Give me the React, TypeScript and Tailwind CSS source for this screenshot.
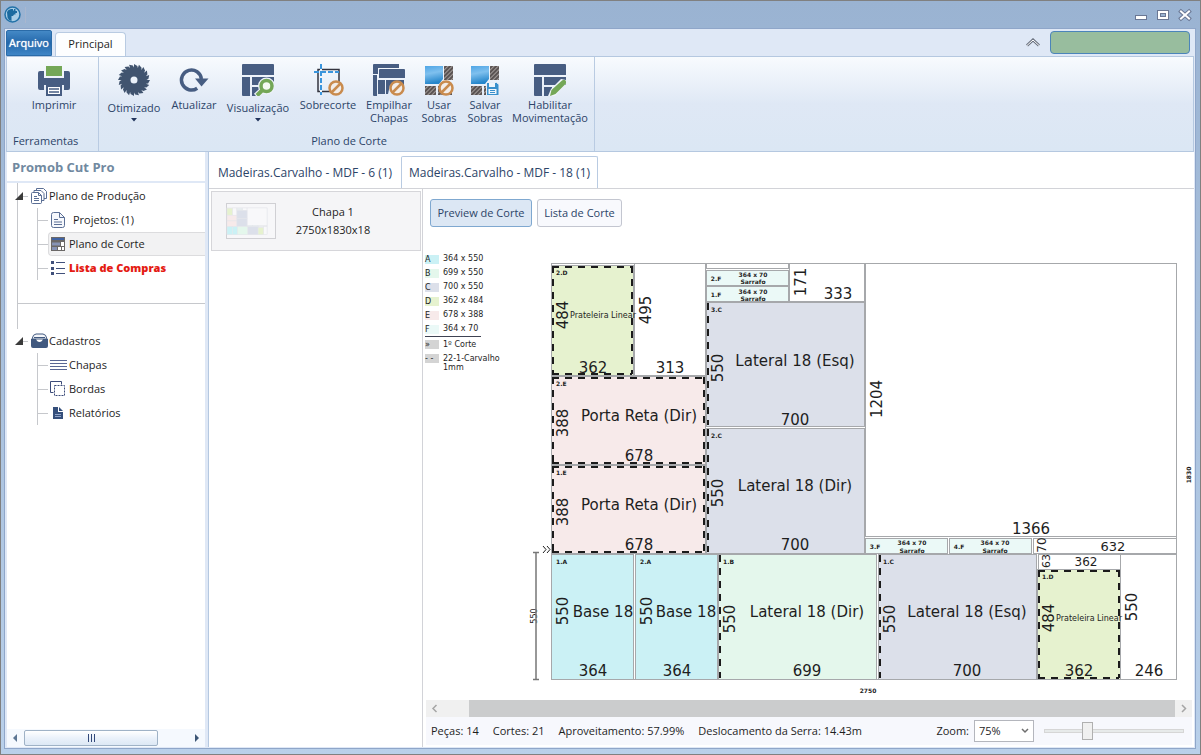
import { useState } from 'react';
import type { ReactNode } from 'react';

type Piece = {
  x: number;
  y: number;
  w: number;
  h: number;
  fill?: string;
  code?: string;
  edges?: string;
};

type Label = {
  x: number;
  y: number;
  text: string;
  size?: number;
  vertical?: boolean;
};

const colors = {
  a: '#cbf1f5',
  b: '#e4f7ec',
  c: '#dce0ea',
  d: '#e6f2cf',
  e: '#f7eaea',
  f: '#ebf9f7',
};

// Positions are relative to the sheet's top left corner
const pieces: Piece[] = [
  { x: 83, y: 0, w: 71, h: 112 },
  { x: 155, y: 0, w: 82, h: 5 },
  { x: 238, y: 0, w: 75, h: 38 },
  { x: 314, y: 0, w: 311, h: 273 },
  { x: 482, y: 275, w: 143, h: 15 },
  { x: 487, y: 291, w: 82, h: 15 },
  { x: 569, y: 291, w: 56, h: 125 },
  { x: 0, y: 2, w: 82, h: 110, fill: colors.d, code: '2.D', edges: 'lrtb' },
  { x: 0, y: 113, w: 154, h: 88, fill: colors.e, code: '2.E', edges: 'lrtb' },
  { x: 0, y: 202, w: 154, h: 88, fill: colors.e, code: '1.E', edges: 'lrtb' },
  { x: 155, y: 7, w: 82, h: 15, fill: colors.f },
  { x: 155, y: 23, w: 82, h: 15, fill: colors.f },
  { x: 155, y: 39, w: 158, h: 124, fill: colors.c, code: '3.C', edges: 'l' },
  { x: 155, y: 165, w: 158, h: 125, fill: colors.c, code: '2.C', edges: 'l' },
  { x: 314, y: 275, w: 82, h: 15, fill: colors.f },
  { x: 398, y: 275, w: 82, h: 15, fill: colors.f },
  { x: 0, y: 291, w: 82, h: 125, fill: colors.a, code: '1.A' },
  { x: 84, y: 291, w: 82, h: 125, fill: colors.a, code: '2.A' },
  { x: 167, y: 291, w: 158, h: 125, fill: colors.b, code: '1.B', edges: 'l' },
  { x: 327, y: 291, w: 158, h: 125, fill: colors.c, code: '1.C', edges: 'l' },
  { x: 486, y: 306, w: 83, h: 110, fill: colors.d, code: '1.D', edges: 'lrtb' },
];

const labels: Label[] = [
  { x: 52, y: 52, text: 'Prateleira Linear', size: 8 },
  { x: 42, y: 105, text: '362' },
  { x: 12, y: 52, text: '484', vertical: true },
  { x: 95, y: 47, text: '495', vertical: true },
  { x: 119, y: 105, text: '313' },
  { x: 88, y: 153, text: 'Porta Reta (Dir)' },
  { x: 88, y: 193, text: '678' },
  { x: 12, y: 160, text: '388', vertical: true },
  { x: 88, y: 242, text: 'Porta Reta (Dir)' },
  { x: 88, y: 282, text: '678' },
  { x: 12, y: 249, text: '388', vertical: true },
  { x: 250, y: 19, text: '171', vertical: true },
  { x: 287, y: 31, text: '333' },
  { x: 244, y: 98, text: 'Lateral 18 (Esq)' },
  { x: 244, y: 157, text: '700' },
  { x: 167, y: 105, text: '550', vertical: true },
  { x: 244, y: 223, text: 'Lateral 18 (Dir)' },
  { x: 244, y: 282, text: '700' },
  { x: 167, y: 230, text: '550', vertical: true },
  { x: 326, y: 136, text: '1204', vertical: true },
  { x: 480, y: 266, text: '1366' },
  { x: 52, y: 349, text: 'Base 18' },
  { x: 42, y: 408, text: '364' },
  { x: 12, y: 348, text: '550', vertical: true },
  { x: 135, y: 349, text: 'Base 18' },
  { x: 126, y: 408, text: '364' },
  { x: 96, y: 348, text: '550', vertical: true },
  { x: 256, y: 349, text: 'Lateral 18 (Dir)' },
  { x: 256, y: 408, text: '699' },
  { x: 179, y: 356, text: '550', vertical: true },
  { x: 416, y: 349, text: 'Lateral 18 (Esq)' },
  { x: 416, y: 408, text: '700' },
  { x: 339, y: 356, text: '550', vertical: true },
  { x: 538, y: 355, text: 'Prateleira Linear', size: 8 },
  { x: 528, y: 408, text: '362' },
  { x: 498, y: 355, text: '484', vertical: true },
  { x: 581, y: 344, text: '550', vertical: true },
  { x: 598, y: 408, text: '246' },
  { x: 562, y: 283, text: '632', size: 13 },
  { x: 535, y: 299, text: '362', size: 12 },
  { x: 491, y: 282, text: '70', size: 12, vertical: true },
  { x: 495, y: 298, text: '63', size: 11, vertical: true },
  { x: 165, y: 15, text: '2.F', size: 6 },
  { x: 165, y: 31, text: '1.F', size: 6 },
  { x: 324, y: 283, text: '3.F', size: 6 },
  { x: 408, y: 283, text: '4.F', size: 6 },
  { x: 202, y: 11, text: '364 x 70', size: 6 },
  { x: 202, y: 18, text: 'Sarrafo', size: 6 },
  { x: 202, y: 28, text: '364 x 70', size: 6 },
  { x: 202, y: 35, text: 'Sarrafo', size: 6 },
  { x: 361, y: 279, text: '364 x 70', size: 6 },
  { x: 361, y: 287, text: 'Sarrafo', size: 6 },
  { x: 444, y: 279, text: '364 x 70', size: 6 },
  { x: 444, y: 287, text: 'Sarrafo', size: 6 },
  { x: 317, y: 427, text: '2750', size: 6 },
  { x: 637, y: 212, text: '1830', size: 6, vertical: true },
  { x: -17, y: 353, text: '550', size: 8, vertical: true },
];

const legend = [
  { code: 'A', size: '364 x 550', tone: 'bg-[#cbf1f5]' },
  { code: 'B', size: '699 x 550', tone: 'bg-[#e4f7ec]' },
  { code: 'C', size: '700 x 550', tone: 'bg-[#dce0ea]' },
  { code: 'D', size: '362 x 484', tone: 'bg-[#e6f2cf]' },
  { code: 'E', size: '678 x 388', tone: 'bg-[#f7eaea]' },
  { code: 'F', size: '364 x 70', tone: 'bg-[#ebf9f7]' },
];

export default function App() {
  return (
    <div className="flex min-h-screen flex-col border border-[#808080] bg-linear-to-b from-[#9ab3d2] to-[#b9d0ea] pr-1 pb-[5px] pl-[3px] font-['Open_Sans',sans-serif] text-[11px] text-[#1e1e1e]">
      <TitleBar />
      <div className="flex flex-1 flex-col border border-[#8fa6c9] bg-[#dfe8f6] px-px pb-px">
        <RibbonTabs />
        <Ribbon />
        <div className="flex flex-1 pl-px">
          <Sidebar />
          <Workspace />
        </div>
      </div>
    </div>
  );
}

function TitleBar() {
  return (
    <header className="flex h-[27px] items-center justify-between pr-1">
      <div className="flex items-center gap-1">
        <IconGlobe />
        <span className="h-4 w-px bg-[#a9b7cf]" />
      </div>
      <div className="flex items-center gap-2">
        <button type="button" aria-label="Minimizar">
          <svg width="14" height="14" viewBox="0 0 14 14">
            <rect x="1.500" y="7.500" width="11" height="4" fill="#fff" stroke="#6a7794" />
          </svg>
        </button>
        <button type="button" aria-label="Maximizar">
          <svg width="14" height="14" viewBox="0 0 14 14">
            <rect x="1.500" y="2.500" width="11" height="9" fill="#fff" stroke="#6a7794" />
            <rect x="4.500" y="5.500" width="5" height="3" fill="#9ab3d2" stroke="#6a7794" />
          </svg>
        </button>
        <button type="button" aria-label="Fechar">
          <svg width="14" height="14" viewBox="0 0 14 14" strokeLinecap="square">
            <path d="M3 3.500 11 10.500M11 3.500 3 10.500" stroke="#6a7794" strokeWidth="4" />
            <path d="M3 3.500 11 10.500M11 3.500 3 10.500" stroke="#fff" strokeWidth="2" />
          </svg>
        </button>
      </div>
    </header>
  );
}

function RibbonTabs() {
  return (
    <nav className="flex h-[27px] items-end justify-between">
      <div className="flex items-end gap-[3px]">
        <button
          type="button"
          className="h-[26px] w-[46px] rounded-t-xs border border-[#2a6ba8] bg-linear-to-b from-[#4489c6] via-[#2368ab] to-[#3f86c6] text-white text-shadow-[0_0_1px_#fff]"
        >
          Arquivo
        </button>
        <button
          type="button"
          className="h-6 w-[71px] rounded-t-sm border border-b-0 border-[#b9cbe2] bg-[#fdfeff]"
        >
          Principal
        </button>
      </div>
      <div className="flex items-center gap-[10px] pr-1 pb-[2px]">
        <button type="button" aria-label="Recolher">
          <svg width="14" height="10" viewBox="0 0 14 10" fill="none">
            <path d="M1 7.500 7 2l6 5.500" stroke="#6b7280" strokeWidth="3" />
            <path d="M1 7.500 7 2l6 5.500" stroke="#fff" strokeWidth="1" />
          </svg>
        </button>
        <button
          type="button"
          aria-label="Conta"
          className="h-[23px] w-[140px] rounded-[4px] border border-[#4b84ba] bg-[#98bd9e]"
        />
      </div>
    </nav>
  );
}

function Ribbon() {
  return (
    <section className="flex h-24 border border-[#b5c8e0] bg-linear-to-b from-[#f8fbfe] via-[#dfe8f5] to-[#dbe7f4] text-[#2c4468]">
      <RibbonGroup title="Ferramentas" className="w-[92px] pl-[6px]" titleClass="text-left">
        <RibbonButton label="Imprimir" width="w-[82px]" icon={<IconPrinter />} />
      </RibbonGroup>
      <RibbonGroup title="Plano de Corte" className="w-[496px] pl-[5px]" titleClass="text-center">
        <RibbonButton label="Otimizado" width="w-[60px]" icon={<IconSaw />} menu />
        <RibbonButton label="Atualizar" width="w-[60px]" icon={<IconRefresh />} />
        <RibbonButton label="Visualização" width="w-[68px]" icon={<IconView />} menu />
        <RibbonButton label="Sobrecorte" width="w-[72px]" icon={<IconOvercut />} />
        <RibbonButton label="Empilhar Chapas" width="w-[50px]" icon={<IconStack />} />
        <RibbonButton label="Usar Sobras" width="w-[50px]" icon={<IconScraps />} />
        <RibbonButton label="Salvar Sobras" width="w-[42px]" icon={<IconScraps save />} />
        <RibbonButton label="Habilitar Movimentação" width="w-[88px]" icon={<IconMove />} />
      </RibbonGroup>
    </section>
  );
}

function RibbonGroup({
  title,
  className,
  titleClass,
  children,
}: {
  title: string;
  className: string;
  titleClass: string;
  children: ReactNode;
}) {
  return (
    <div className={`flex shrink-0 flex-col justify-between border-r border-[#b9cbe2] pt-[7px] pb-[2px] ${className}`}>
      <div className="flex items-start">{children}</div>
      <div className={`leading-4 ${titleClass}`}>{title}</div>
    </div>
  );
}

function RibbonButton({
  label,
  width,
  icon,
  menu = false,
}: {
  label: string;
  width: string;
  icon: ReactNode;
  menu?: boolean;
}) {
  return (
    <button type="button" className={`flex shrink-0 flex-col items-center leading-[13px] ${width}`}>
      {icon}
      <span className={menu ? 'mt-[5px]' : 'mt-[2px]'}>{label}</span>
      {menu && (
        <svg width="6" height="4" viewBox="0 0 6 4" className="mt-1">
          <path d="M0 0h6L3 3.500z" fill="#22345c" />
        </svg>
      )}
    </button>
  );
}

function Sidebar() {
  return (
    <aside className="flex w-[198px] shrink-0 flex-col bg-white">
      <h1 className="h-[31px] border-b-2 border-[#dfe8f6] pl-[5px] text-[13px] leading-[30px] font-bold text-[#7189a0]">
        Promob Cut Pro
      </h1>
      <div className="ml-[10px] h-[121px] border-b border-l border-[#c6c8cc] pt-px">
        <TreeRoot icon={<IconDocs />} label="Plano de Produção" />
        <ul className="ml-[19px] border-l border-[#c6c8cc]">
          <TreeItem icon={<IconDoc />} label="Projetos: (1)" indent />
          <TreeItem icon={<IconPlan />} label="Plano de Corte" active />
          <TreeItem icon={<IconList />} label="Lista de Compras" alert />
        </ul>
      </div>
      <div className="ml-[10px] h-[25px] border-l border-[#c6c8cc]" />
      <div className="ml-[11px]">
        <TreeRoot icon={<IconInbox />} label="Cadastros" />
        <ul className="ml-[19px] border-l border-[#c6c8cc]">
          <TreeItem icon={<IconSheets />} label="Chapas" />
          <TreeItem icon={<IconEdges />} label="Bordas" />
          <TreeItem icon={<IconReport />} label="Relatórios" />
        </ul>
      </div>
      <div className="mt-auto flex h-[18px] items-center gap-[6px] bg-[#f5f9fe] px-[5px]">
        <svg width="6" height="8" viewBox="0 0 6 8">
          <path d="M5 0v8L1 4z" fill="#5c7693" />
        </svg>
        <div className="flex h-4 w-[134px] items-center justify-center gap-[2px] rounded-xs border border-[#9fb2c6] bg-linear-to-b from-white via-[#eaf1fa] to-[#dde8f5]">
          <span className="h-2 w-px bg-[#33497a]" />
          <span className="h-2 w-px bg-[#33497a]" />
          <span className="h-2 w-px bg-[#33497a]" />
        </div>
        <svg width="6" height="8" viewBox="0 0 6 8" className="ml-auto">
          <path d="M1 0v8l4-4z" fill="#3c5675" />
        </svg>
      </div>
    </aside>
  );
}

function TreeRoot({ icon, label }: { icon: ReactNode; label: string }) {
  return (
    <div className="flex h-6 items-center">
      <svg width="8" height="8" viewBox="0 0 8 8" className="-ml-[3px]">
        <path d="M8 0v8H0z" fill="#3b3b3b" />
      </svg>
      <span className="w-[5px] border-t border-[#c6c8cc]" />
      <span className="ml-[3px] flex w-[18px] shrink-0">{icon}</span>
      <span>{label}</span>
    </div>
  );
}

function TreeItem({
  icon,
  label,
  active = false,
  alert = false,
  indent = false,
}: {
  icon: ReactNode;
  label: string;
  active?: boolean;
  alert?: boolean;
  indent?: boolean;
}) {
  return (
    <li className="flex h-6 items-center">
      <span className="w-[10px] shrink-0 border-t border-[#c6c8cc]" />
      <span
        className={`flex h-6 flex-1 items-center rounded-l-sm border border-r-0 pl-px whitespace-nowrap ${
          active ? 'border-[#dcdcde] bg-[#f2f2f3]' : 'border-transparent'
        } ${alert ? 'font-extrabold text-[#e41b13]' : ''}`}
      >
        <span className="flex w-[19px] shrink-0">{icon}</span>
        <span className={indent ? 'pl-1' : ''}>{label}</span>
      </span>
    </li>
  );
}

function Workspace() {
  return (
    <main className="ml-[3px] flex min-w-0 flex-1 flex-col border-l border-[#b5c8e0] bg-white">
      <div className="flex h-9 items-end text-[12px] text-[#2c4468]">
        <button type="button" className="h-8 w-[192px] pt-px">
          Madeiras.Carvalho - MDF - 6 (1)
        </button>
        <button
          type="button"
          className="h-8 w-[197px] rounded-t-xs border border-b-0 border-[#b9cbe2]"
        >
          Madeiras.Carvalho - MDF - 18 (1)
        </button>
      </div>
      <div className="flex flex-1 border-t border-[#d2d3d8]">
        <div className="w-[214px] shrink-0 border-r border-[#d2d3d8] py-[2px] pr-px pl-[2px]">
          <SheetCard />
        </div>
        <div className="flex min-w-0 flex-1 flex-col">
          <div className="flex gap-[5px] px-[7px] pt-[10px] text-[#2c4468]">
            <button
              type="button"
              className="h-7 w-[102px] rounded-[3px] border border-[#7fa8d0] bg-[#dce7f4]"
            >
              Preview de Corte
            </button>
            <button
              type="button"
              className="h-7 w-[85px] rounded-[3px] border border-[#c3c6d0] bg-[#f8f9fd]"
            >
              Lista de Corte
            </button>
          </div>
          <div className="flex flex-1 items-start overflow-hidden pt-[25px]">
            <Legend />
            <CutPlan />
          </div>
          <HorizontalScroll />
          <StatusBar />
        </div>
      </div>
    </main>
  );
}

function SheetCard() {
  return (
    <button
      type="button"
      className="flex h-[60px] w-full items-center border border-[#d6d6da] bg-[#f5f5f7] pl-[14px]"
    >
      <svg width="50" height="36" viewBox="0 0 50 36" className="shrink-0">
        <rect x="0.500" y="0.500" width="49" height="35" fill="#f7f7f9" stroke="#d0d0d4" />
        <g transform="translate(1 5) scale(0.064)">
          <rect width="626" height="416" fill="none" stroke="#e4e5ea" strokeWidth="8" />
          {pieces.map((p, i) => (
            <rect
              key={i}
              x={p.x}
              y={p.y}
              width={p.w}
              height={p.h}
              fill={p.fill ?? '#f8f8fa'}
              stroke="#e4e5ea"
              strokeWidth="8"
            />
          ))}
        </g>
      </svg>
      <span className="ml-[19px] w-[76px] leading-[18px]">
        <span className="block">Chapa 1</span>
        <span className="block">2750x1830x18</span>
      </span>
    </button>
  );
}

function Legend() {
  return (
    <div className="w-[100px] shrink-0 pl-[2px] font-['DejaVu_Sans',sans-serif] text-[8px]">
      <ul className="w-[56px] border-b border-[#3f4353]">
        {legend.map((item) => (
          <li key={item.code} className="flex h-[14px] items-center gap-1 whitespace-nowrap">
            <span className={`h-[9px] w-[14px] shrink-0 leading-[9px] ${item.tone}`}>{item.code}</span>
            <span>{item.size}</span>
          </li>
        ))}
      </ul>
      <div className="mt-[3px] flex items-center gap-1 leading-[9px]">
        <span className="h-[9px] w-[14px] bg-[#d4d4d4]">»</span>
        <span>1º Corte</span>
      </div>
      <div className="mt-[5px] flex items-start gap-1 leading-[9px]">
        <span className="h-[9px] w-[14px] shrink-0 bg-[#d4d4d4]">- -</span>
        <span className="w-[60px]">22-1-Carvalho 1mm</span>
      </div>
    </div>
  );
}

function edgePath(p: Piece) {
  const left = p.x + 2;
  const right = p.x + p.w - 1;
  const top = p.y + 2;
  const bottom = p.y + p.h - 1;
  const lines: Record<string, string> = {
    l: `M${left} ${top - 1}V${bottom}`,
    r: `M${right} ${top - 1}V${bottom}`,
    t: `M${left - 1} ${top}H${right}`,
    b: `M${left - 1} ${bottom}H${right}`,
  };
  return (p.edges ?? '').split('').map((e) => lines[e]).join('');
}

function CutPlan() {
  return (
    <svg
      width="670"
      height="440"
      viewBox="-28 -11 670 440"
      className="shrink-0 overflow-visible font-['DejaVu_Sans',sans-serif]"
      fill="#1e1e1e"
    >
      <rect x="0.500" y="0.500" width="625" height="416" fill="#fff" stroke="#a6a8ab" />
      {pieces.map((p, i) => (
        <g key={i}>
          <rect
            x={p.x + 0.5}
            y={p.y + 0.5}
            width={p.w}
            height={p.h}
            fill={p.fill ?? '#fff'}
            stroke="#a6a8ab"
          />
          {p.edges && (
            <path
              d={edgePath(p)}
              stroke="#1b1b1b"
              strokeWidth="2"
              strokeDasharray="7 6"
              fill="none"
            />
          )}
          {p.code && (
            <text x={p.x + 5} y={p.y + 10} fontSize="6" fontWeight="bold">
              {p.code}
            </text>
          )}
        </g>
      ))}
      {labels.map((l, i) => (
        <text
          key={i}
          x={l.x}
          y={l.y}
          fontSize={l.size ?? 15}
          fontWeight={l.size === 6 ? 'bold' : 'normal'}
          textAnchor="middle"
          dominantBaseline="central"
          transform={l.vertical ? `rotate(-90 ${l.x} ${l.y})` : undefined}
        >
          {l.text}
        </text>
      ))}
      <path d="M-15 289.500V416.500M-18 289.500H-12M-18 416.500H-12" stroke="#777" strokeWidth="1.500" />
      <path d="M-8 283l3 3.500-3 3.500M-4 283l3 3.500-3 3.500" stroke="#1e1e1e" fill="none" />
    </svg>
  );
}

function HorizontalScroll() {
  return (
    <div className="mr-[2px] ml-[3px] flex h-[17px] items-center bg-[#f0f0f0]">
      <svg width="17" height="17" viewBox="0 0 17 17" fill="none">
        <path d="M10.500 5 7 8.500l3.500 3.500" stroke="#a5a5a5" strokeWidth="1.500" />
      </svg>
      <span className="ml-[26px] h-full flex-1 bg-[#cbcccd]" />
      <svg width="17" height="17" viewBox="0 0 17 17" fill="none">
        <path d="M7 5l3.500 3.500L7 12" stroke="#a5a5a5" strokeWidth="1.500" />
      </svg>
    </div>
  );
}

function StatusBar() {
  const [zoom, setZoom] = useState('75');

  return (
    <footer className="mr-[2px] mb-[2px] ml-[3px] flex h-7 items-center gap-[14px] bg-[#f7f8fd] pl-[5px] whitespace-nowrap">
      <span>Peças: 14</span>
      <span>Cortes: 21</span>
      <span>Aproveitamento: 57.99%</span>
      <span>Deslocamento da Serra: 14.43m</span>
      <div className="ml-auto flex items-center">
        <label htmlFor="zoom">Zoom:</label>
        <div className="relative ml-[5px]">
          <select
            id="zoom"
            value={zoom}
            onChange={(e) => setZoom(e.target.value)}
            className="h-[22px] w-[60px] appearance-none border border-[#b4b6bd] bg-white pl-1"
          >
            <option value="50">50%</option>
            <option value="75">75%</option>
            <option value="100">100%</option>
          </select>
          <svg
            width="8"
            height="6"
            viewBox="0 0 8 6"
            fill="none"
            className="pointer-events-none absolute top-2 right-[5px]"
          >
            <path d="M1 1l3 3 3-3" stroke="#6e6e6e" strokeWidth="1.500" />
          </svg>
        </div>
        <input
          type="range"
          aria-label="Zoom"
          min="0"
          max="200"
          value={zoom === '100' ? 90 : zoom === '75' ? 58 : 30}
          onChange={(e) => setZoom(Number(e.target.value) > 75 ? '100' : Number(e.target.value) > 45 ? '75' : '50')}
          className="mr-2 ml-[10px] h-[18px] w-[140px] appearance-none bg-transparent [&::-webkit-slider-runnable-track]:h-1 [&::-webkit-slider-runnable-track]:border [&::-webkit-slider-runnable-track]:border-[#d6d6d6] [&::-webkit-slider-runnable-track]:bg-[#e7eaea] [&::-webkit-slider-thumb]:-mt-2 [&::-webkit-slider-thumb]:h-[18px] [&::-webkit-slider-thumb]:w-[11px] [&::-webkit-slider-thumb]:appearance-none [&::-webkit-slider-thumb]:border [&::-webkit-slider-thumb]:border-[#b0b0b0] [&::-webkit-slider-thumb]:bg-[#f0f0f0]"
        />
      </div>
    </footer>
  );
}

/* Icons */

function IconGlobe() {
  return (
    <svg width="17" height="17" viewBox="0 0 17 17">
      <circle cx="8.500" cy="8.500" r="7.500" fill="#a9cde6" stroke="#2372a8" strokeWidth="1.500" />
      <path
        d="M3 6 4.500 4 7 3h2v1.500h1V3h1.500v2H13v2h-1.500v1.500H10L9 10H7.500v5L5 14 3.500 11.500z"
        fill="#1b6a9f"
      />
    </svg>
  );
}

function IconPrinter() {
  return (
    <svg width="32" height="32" viewBox="0 0 32 32">
      <path d="M8 2h16v10H8z" fill="#74a757" />
      <path
        d="M2 7h4v7h20V7h4q2 0 2 2v15q0 2-2 2h-4v-5H6v5H2q-2 0-2-2V9q0-2 2-2z"
        fill="#475d82"
      />
      <path d="M9 22h14v9H9z" fill="#fff" stroke="#475d82" strokeWidth="2" />
      <path d="M11 25h10M11 28h10" stroke="#475d82" strokeWidth="1.500" />
    </svg>
  );
}

function IconSaw() {
  const teeth = 20;
  let d = '';
  for (let i = 0; i < teeth; i++) {
    const a = (i / teeth) * Math.PI * 2;
    const b = a + (Math.PI * 2 * 0.75) / teeth;
    d += `${i === 0 ? 'M' : 'L'}${16 + 12.5 * Math.cos(a)} ${16 + 12.5 * Math.sin(a)}`;
    d += `L${16 + 16 * Math.cos(a)} ${16 + 16 * Math.sin(a)}`;
    d += `L${16 + 14.5 * Math.cos(b)} ${16 + 14.5 * Math.sin(b)}`;
  }
  return (
    <svg width="32" height="32" viewBox="0 0 32 32">
      <path d={`${d}zM19.500 16a3.500 3.500 0 1 0-7 0 3.500 3.500 0 1 0 7 0z`} fill="#41546f" fillRule="evenodd" />
    </svg>
  );
}

function IconRefresh() {
  return (
    <svg width="32" height="32" viewBox="0 0 32 32">
      <path d="M19.200 24.200A10 10 0 1 1 23.400 15" fill="none" stroke="#475d82" strokeWidth="3.500" />
      <path d="M17 14.500h13.500l-7 8z" fill="#475d82" />
    </svg>
  );
}

function IconView() {
  return (
    <svg width="32" height="32" viewBox="0 0 32 32">
      <path d="M0 1q0-1 1-1h30q1 0 1 1v10H0zM0 13h8v19H1q-1 0-1-1zM10 13h22v8H10zM10 23h8v9h-8z" fill="#475d82" />
      <circle cx="24.500" cy="22" r="6" fill="#eef3fa" stroke="#eef3fa" strokeWidth="5" />
      <path d="M20.500 26 14 32" stroke="#eef3fa" strokeWidth="6" />
      <path d="M10 13h10l-4 3h-6z" fill="#475d82" />
      <circle cx="24.500" cy="22" r="5.500" fill="#f4f9f2" stroke="#74a757" strokeWidth="3.500" />
      <path d="M20.500 26 15 31.500" stroke="#74a757" strokeWidth="4" />
    </svg>
  );
}

function NoSign() {
  return (
    <g fill="none" stroke="#c98b4e" strokeWidth="2.500">
      <circle cx="24" cy="24" r="6.500" fill="#f2ede9" />
      <path d="M19.500 28.500l9-9" />
    </g>
  );
}

function IconOvercut() {
  return (
    <svg width="32" height="32" viewBox="0 0 32 32">
      <path d="M6 5.500h21v22H6z" fill="none" stroke="#33343f" strokeWidth="1.500" />
      <path d="M2 8h25M9 0v31" stroke="#f0f5fb" strokeWidth="2" />
      <path d="M2 8h25M9 0v31" stroke="#3a95dd" strokeWidth="2" strokeDasharray="5 2" />
      <NoSign />
    </svg>
  );
}

function IconStack() {
  return (
    <svg width="32" height="32" viewBox="0 0 32 32" fill="#475d82">
      <path d="M0 1q0-1 1-1h25v4H5v6H0zM0 11h4v21H1q-1 0-1-1z" />
      <path d="M6 6q0-1 1-1h24q1 0 1 1v8H6zM5 16h7v14H5zM13 16h18v5H17l-2 9h-2z" />
      <NoSign />
    </svg>
  );
}

function IconScraps({ save = false }: { save?: boolean }) {
  return (
    <svg width="30" height="32" viewBox="0 0 30 32">
      <defs>
        <linearGradient id="scrap" x1="0" y1="0" x2="0.200" y2="1">
          <stop offset="0" stopColor="#4fa6e6" />
          <stop offset="0.450" stopColor="#7fc0ee" />
          <stop offset="1" stopColor="#2586cb" />
        </linearGradient>
        <pattern id="hatch" width="3" height="3" patternUnits="userSpaceOnUse" patternTransform="rotate(45)">
          <rect width="3" height="3" fill="#5a5352" />
          <rect width="1" height="3" fill="#a39c9a" />
        </pattern>
      </defs>
      <path d="M1 2h18v13l-4 5H1z" fill="url(#scrap)" />
      <path d="M20 2h9v14h-9zM1 22h11v9H1zM14 22h14v9H14z" fill="url(#hatch)" />
      {save ? (
        <g>
          <path d="M16.500 18.500h10l2.500 2v11H16.500z" fill="#3990cc" stroke="#e6eef8" />
          <path d="M19 19h6v4h-6zM18.500 25h8v5h-8z" fill="#eef5fb" />
          <path d="M20 26.500h5M20 28.500h5" stroke="#3990cc" />
        </g>
      ) : (
        <g transform="translate(-2 0)">
          <NoSign />
        </g>
      )}
    </svg>
  );
}

function IconMove() {
  return (
    <svg width="32" height="32" viewBox="0 0 32 32">
      <path d="M0 1q0-1 1-1h30q1 0 1 1v10H0zM0 13h8v19H1q-1 0-1-1zM10 13h22v8H10zM10 23h8v9h-8z" fill="#475d82" />
      <path d="M14 32l3-7 10-10 5 1v4L21 32z" fill="#f0f5fb" />
      <path d="M16 32l1.500-6L28 16.500q2-1.500 3.500 0t0 3.500L21.500 30z" fill="#74a757" />
    </svg>
  );
}

function IconDocs() {
  return (
    <svg width="16" height="16" viewBox="0 0 16 16" fill="#fff" stroke="#5b6f95">
      <path d="M5.500 3V.5h7l3 3v7H13" />
      <path d="M3 5V2.500h7l3 3v7h-2" />
      <path d="M.5 5.500q0-1 1-1h6l3 3v7q0 1-1 1h-8q-1 0-1-1z" />
      <path d="M7.500 4.500v3h3M3 8.500h3M3 10.500h5M3 12.500h5" fill="none" />
    </svg>
  );
}

function IconDoc() {
  return (
    <svg width="16" height="16" viewBox="0 0 16 16" fill="none" stroke="#5b6f95">
      <path d="M3.500.5h6l5 5v8q0 2-2 2h-9q-2 0-2-2v-11q0-2 2-2z" fill="#f6f8fc" />
      <path d="M9.500.5v5h5M4 7.500h4M4 10h8M4 12.500h8" />
    </svg>
  );
}

function IconPlan() {
  return (
    <svg width="16" height="16" viewBox="0 0 16 16">
      <path d="M1 1h14v14H1z" fill="#6b6867" />
      <path d="M2 3h12" stroke="#3f62a3" strokeWidth="2" />
      <path d="M2 6.500h8v3H2zM2 11h5v3H2z" fill="#8793b5" />
      <path d="M11 6h3v4h-3zM8 11h3v3H8zM12 11h2v3h-2z" fill="#fff" />
    </svg>
  );
}

function IconList() {
  return (
    <svg width="16" height="16" viewBox="0 0 16 16">
      <path d="M1 1h3v3H1zM1 7h3v3H1zM1 12h3v3H1z" fill="#41507b" />
      <path d="M6 2.500h9M6 8.500h9M6 13.500h9" stroke="#41507b" />
    </svg>
  );
}

function IconInbox() {
  return (
    <svg width="17" height="16" viewBox="0 0 17 16">
      <path d="M1 6q1-5 4-5h7q3 0 4 5z" fill="#f4f6fa" stroke="#41597f" />
      <path d="M3 4.500h11" stroke="#41597f" />
      <path d="M0 6h5q1 3 3.500 3T12 6h5v7q0 2-2 2H2q-2 0-2-2z" fill="#41597f" />
    </svg>
  );
}

function IconSheets() {
  return (
    <svg width="17" height="16" viewBox="0 0 17 16">
      <path d="M0 3.500h17M0 6.500h17M0 9.500h17M0 12.500h17" stroke="#5a6794" />
    </svg>
  );
}

function IconEdges() {
  return (
    <svg width="16" height="16" viewBox="0 0 16 16" fill="none" stroke="#3b4a78">
      <path d="M3.500 11.500h-3V.5h11v3" />
      <path d="M4.500 4.500h10v10h-10z" strokeDasharray="2 1" />
    </svg>
  );
}

function IconReport() {
  return (
    <svg width="16" height="16" viewBox="0 0 16 16">
      <path d="M3 2h5v5h5v7H3z" fill="#354f7b" />
      <path d="M9 2l4 4H9z" fill="#354f7b" />
      <path d="M5 9.500h6M5 11.500h6" stroke="#8fa3c8" />
    </svg>
  );
}
